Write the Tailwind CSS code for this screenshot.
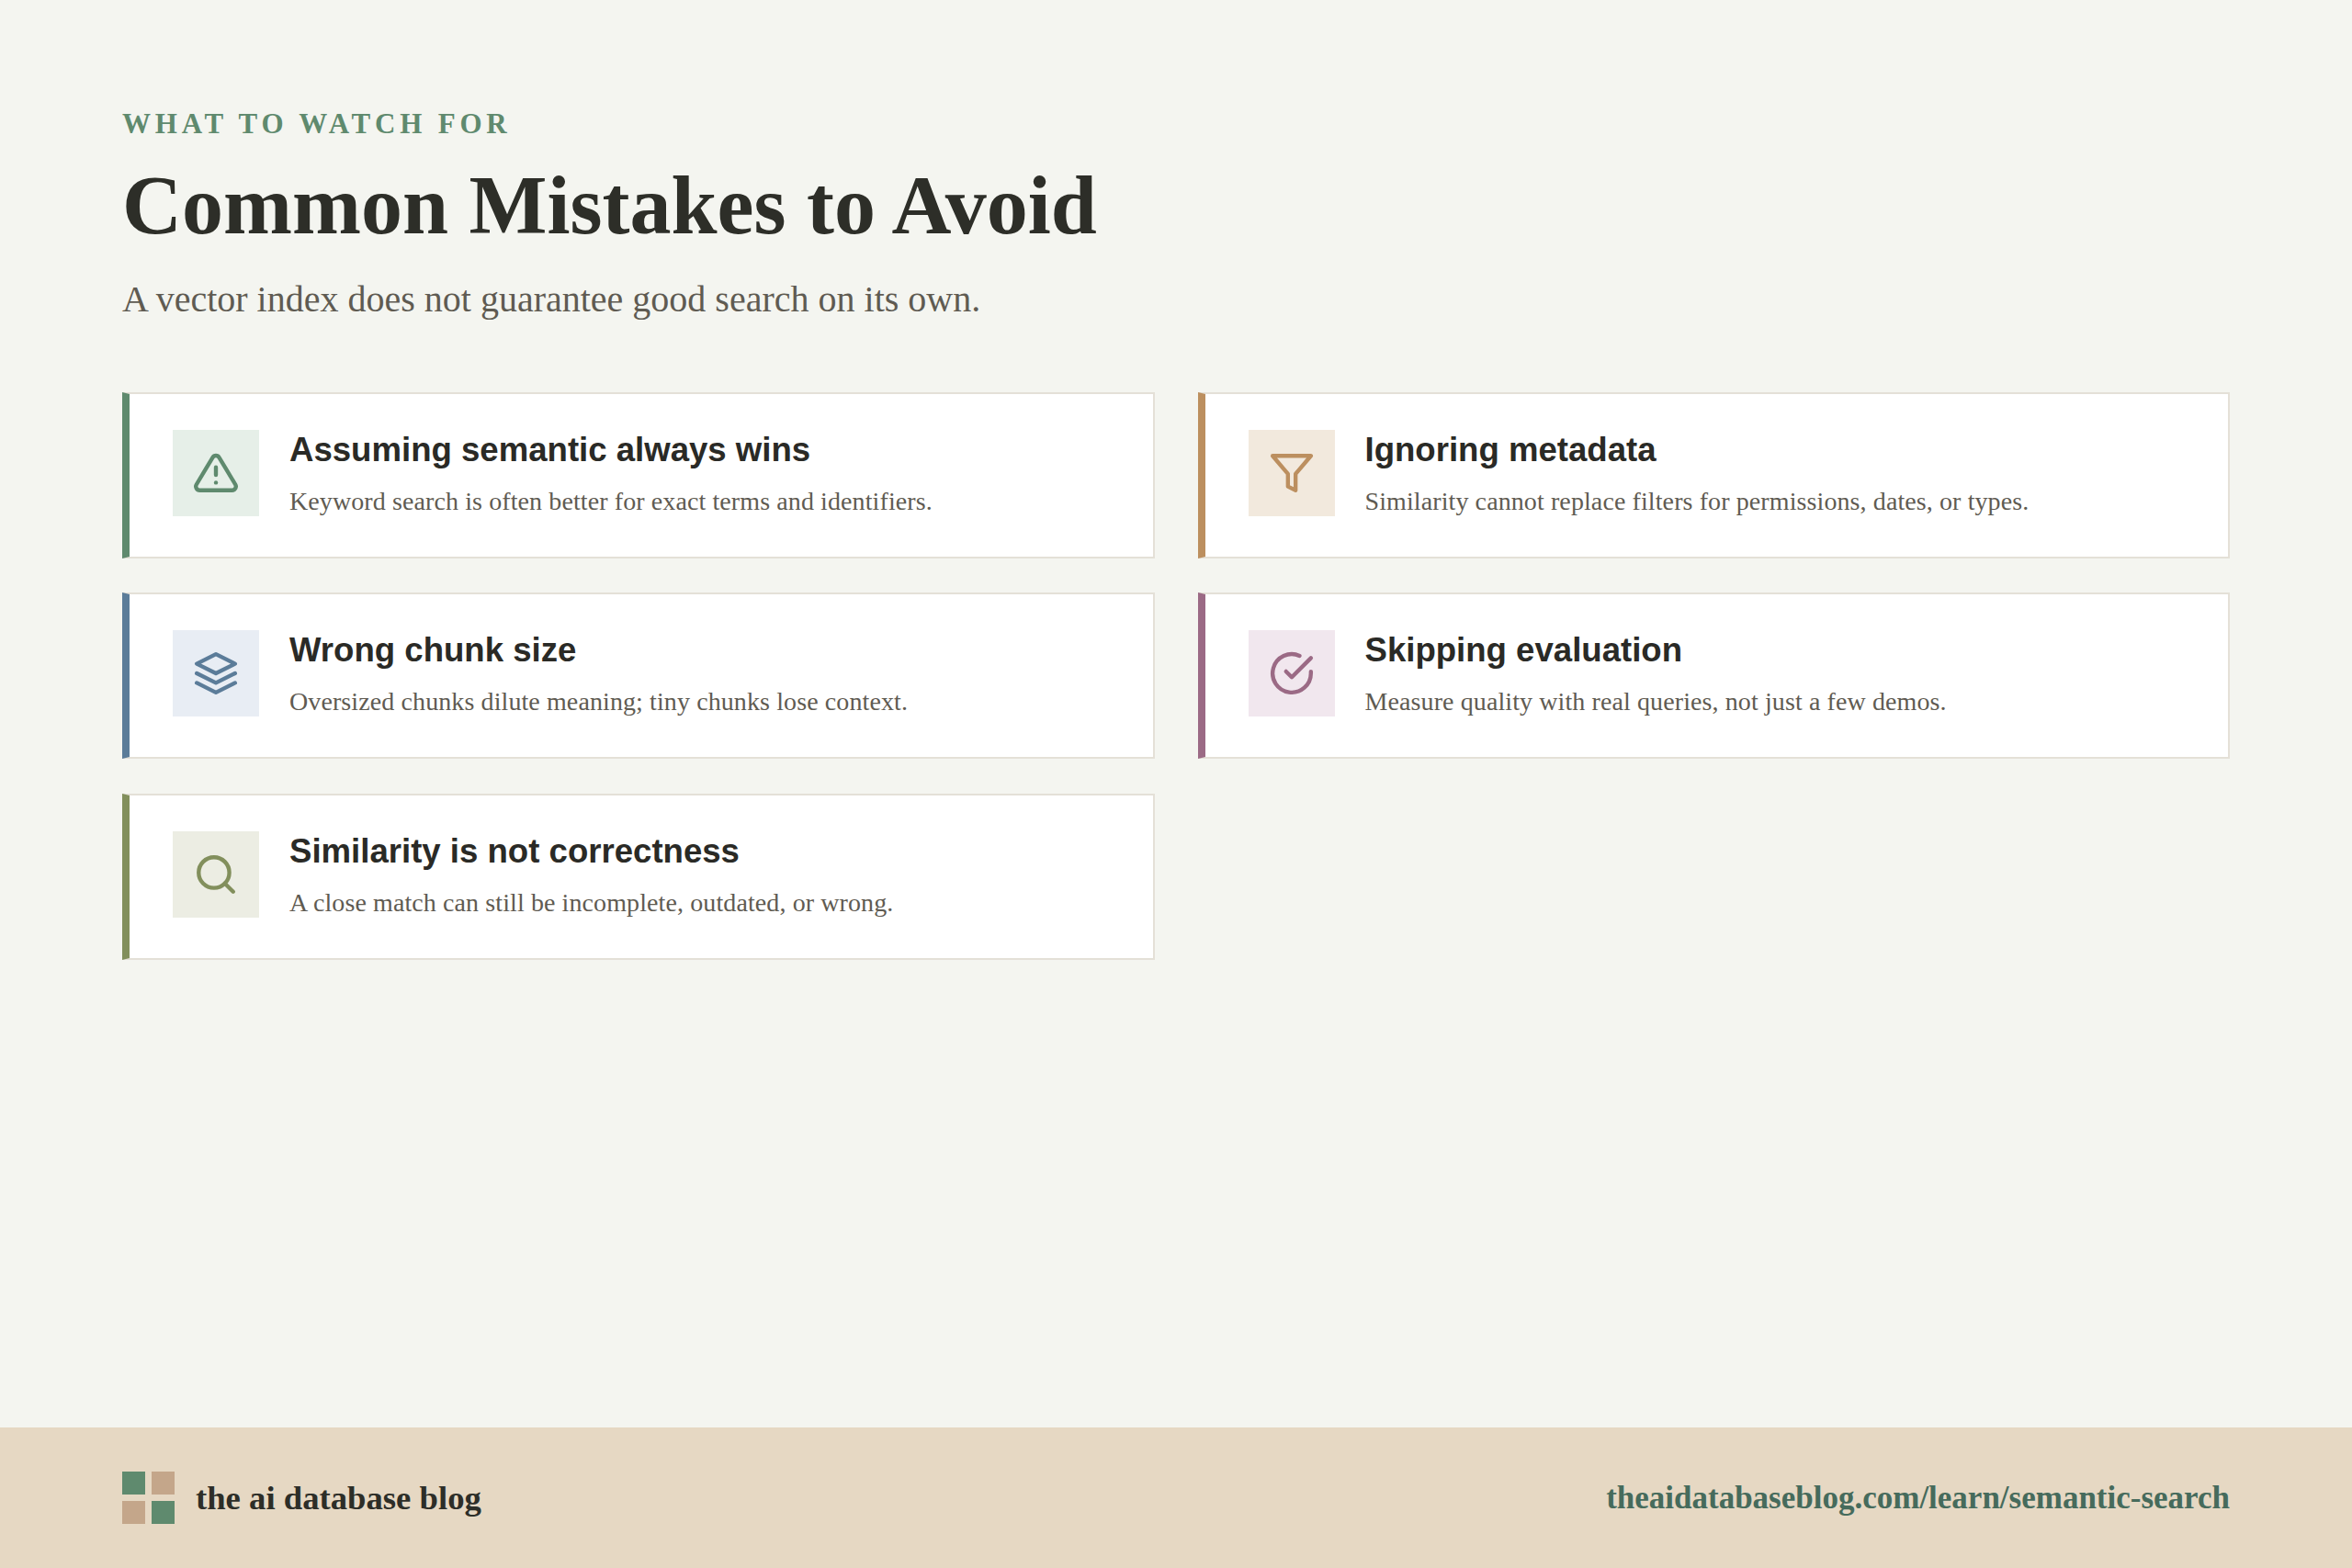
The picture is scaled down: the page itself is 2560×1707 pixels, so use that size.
<!DOCTYPE html>
<html lang="en">
<head>
  <meta charset="UTF-8">
  <title>Common Mistakes to Avoid</title>
  <script src="https://cdn.jsdelivr.net/npm/@tailwindcss/browser@4"></script>
</head>
<body class="m-0">
  <div class="flex flex-col w-[2560px] h-[1707px] bg-[#f4f5f0] font-['Liberation_Serif',serif]">
    <main class="flex-1 px-[133px] pt-[117px]">
      <div class="text-[31px] leading-[36px] font-bold tracking-[4.8px] text-[#5f8a6e]">WHAT TO WATCH FOR</div>
      <h1 class="mt-[21px] text-[90px] leading-[100px] font-bold text-[#2d2e28]">Common Mistakes to Avoid</h1>
      <p class="mt-[27px] text-[40px] leading-[50px] text-[#5f5b52]">A vector index does not guarantee good search on its own.</p>

      <div class="mt-[76px] grid grid-cols-2 gap-x-[47px] gap-y-[37.4px]">
        <!-- card 1 -->
        <div class="flex items-start gap-[33px] bg-white border-2 border-[#e4e0d7] border-l-8 border-l-[#5f8a6e] pl-[47px] pr-[32px] pt-[39px] pb-[40px]">
          <div class="flex items-center justify-center w-[94px] h-[94px] shrink-0 bg-[#e6efe8]">
            <svg class="w-[50px] h-[50px] text-[#5f8a6e]" viewBox="0 0 24 24" fill="none" stroke="currentColor" stroke-width="2.1" stroke-linecap="round" stroke-linejoin="round">
              <path d="M10.29 3.86L1.82 18a2 2 0 0 0 1.71 3h16.94a2 2 0 0 0 1.71-3L13.71 3.86a2 2 0 0 0-3.42 0z"/>
              <line x1="12" y1="9" x2="12" y2="13"/>
              <line x1="12" y1="17" x2="12.01" y2="17"/>
            </svg>
          </div>
          <div>
            <h2 class="font-['Liberation_Sans',sans-serif] text-[36.6px] leading-[44px] font-bold text-[#2a2a26]">Assuming semantic always wins</h2>
            <p class="mt-[14px] text-[28px] tracking-[0.1px] leading-[40px] text-[#5f5b52]">Keyword search is often better for exact terms and identifiers.</p>
          </div>
        </div>

        <!-- card 2 -->
        <div class="flex items-start gap-[33px] bg-white border-2 border-[#e4e0d7] border-l-8 border-l-[#bc8f5f] pl-[47px] pr-[32px] pt-[39px] pb-[40px]">
          <div class="flex items-center justify-center w-[94px] h-[94px] shrink-0 bg-[#f2e9dd]">
            <svg class="w-[50px] h-[50px] text-[#bc8f5f]" viewBox="0 0 24 24" fill="none" stroke="currentColor" stroke-width="2.1" stroke-linecap="round" stroke-linejoin="round">
              <path d="M22 3H2l8 9.46V19l4 2v-8.54L22 3z"/>
            </svg>
          </div>
          <div>
            <h2 class="font-['Liberation_Sans',sans-serif] text-[36.6px] leading-[44px] font-bold text-[#2a2a26]">Ignoring metadata</h2>
            <p class="mt-[14px] text-[28px] tracking-[0.1px] leading-[40px] text-[#5f5b52]">Similarity cannot replace filters for permissions, dates, or types.</p>
          </div>
        </div>

        <!-- card 3 -->
        <div class="flex items-start gap-[33px] bg-white border-2 border-[#e4e0d7] border-l-8 border-l-[#5b7c99] pl-[47px] pr-[32px] pt-[39px] pb-[40px]">
          <div class="flex items-center justify-center w-[94px] h-[94px] shrink-0 bg-[#e8edf4]">
            <svg class="w-[50px] h-[50px] text-[#5b7c99]" viewBox="0 0 24 24" fill="none" stroke="currentColor" stroke-width="2.1" stroke-linecap="round" stroke-linejoin="round">
              <path d="M12 2L2 7l10 5 10-5-10-5z"/>
              <path d="M2 17l10 5 10-5"/>
              <path d="M2 12l10 5 10-5"/>
            </svg>
          </div>
          <div>
            <h2 class="font-['Liberation_Sans',sans-serif] text-[36.6px] leading-[44px] font-bold text-[#2a2a26]">Wrong chunk size</h2>
            <p class="mt-[14px] text-[28px] tracking-[0.1px] leading-[40px] text-[#5f5b52]">Oversized chunks dilute meaning; tiny chunks lose context.</p>
          </div>
        </div>

        <!-- card 4 -->
        <div class="flex items-start gap-[33px] bg-white border-2 border-[#e4e0d7] border-l-8 border-l-[#9b6a85] pl-[47px] pr-[32px] pt-[39px] pb-[40px]">
          <div class="flex items-center justify-center w-[94px] h-[94px] shrink-0 bg-[#f1e7ee]">
            <svg class="w-[50px] h-[50px] text-[#9b6a85]" viewBox="0 0 24 24" fill="none" stroke="currentColor" stroke-width="2.1" stroke-linecap="round" stroke-linejoin="round">
              <path d="M22 11.08V12a10 10 0 1 1-5.93-9.14"/>
              <polyline points="22 4 12 14.01 9 11.01"/>
            </svg>
          </div>
          <div>
            <h2 class="font-['Liberation_Sans',sans-serif] text-[36.6px] leading-[44px] font-bold text-[#2a2a26]">Skipping evaluation</h2>
            <p class="mt-[14px] text-[28px] tracking-[0.1px] leading-[40px] text-[#5f5b52]">Measure quality with real queries, not just a few demos.</p>
          </div>
        </div>

        <!-- card 5 -->
        <div class="flex items-start gap-[33px] bg-white border-2 border-[#e4e0d7] border-l-8 border-l-[#828f5c] pl-[47px] pr-[32px] pt-[39px] pb-[40px]">
          <div class="flex items-center justify-center w-[94px] h-[94px] shrink-0 bg-[#ecede3]">
            <svg class="w-[50px] h-[50px] text-[#828f5c]" viewBox="0 0 24 24" fill="none" stroke="currentColor" stroke-width="2.1" stroke-linecap="round" stroke-linejoin="round">
              <circle cx="11" cy="11" r="8"/>
              <line x1="21" y1="21" x2="16.65" y2="16.65"/>
            </svg>
          </div>
          <div>
            <h2 class="font-['Liberation_Sans',sans-serif] text-[36.6px] leading-[44px] font-bold text-[#2a2a26]">Similarity is not correctness</h2>
            <p class="mt-[14px] text-[28px] tracking-[0.1px] leading-[40px] text-[#5f5b52]">A close match can still be incomplete, outdated, or wrong.</p>
          </div>
        </div>
      </div>
    </main>

    <footer class="flex items-center justify-between h-[153px] px-[133px] bg-[#e6d8c3]">
      <div class="flex items-center gap-[23px]">
        <div class="grid grid-cols-2 gap-[7px] w-[57px]">
          <div class="h-[25px] bg-[#5f8a6e]"></div>
          <div class="h-[25px] bg-[#c4a68a]"></div>
          <div class="h-[25px] bg-[#c4a68a]"></div>
          <div class="h-[25px] bg-[#5f8a6e]"></div>
        </div>
        <span class="text-[36.7px] font-bold text-[#2d2e28]">the ai database blog</span>
      </div>
      <span class="pt-[2px] text-[35px] font-bold text-[#466b5c]">theaidatabaseblog.com/learn/semantic-search</span>
    </footer>
  </div>
</body>
</html>
